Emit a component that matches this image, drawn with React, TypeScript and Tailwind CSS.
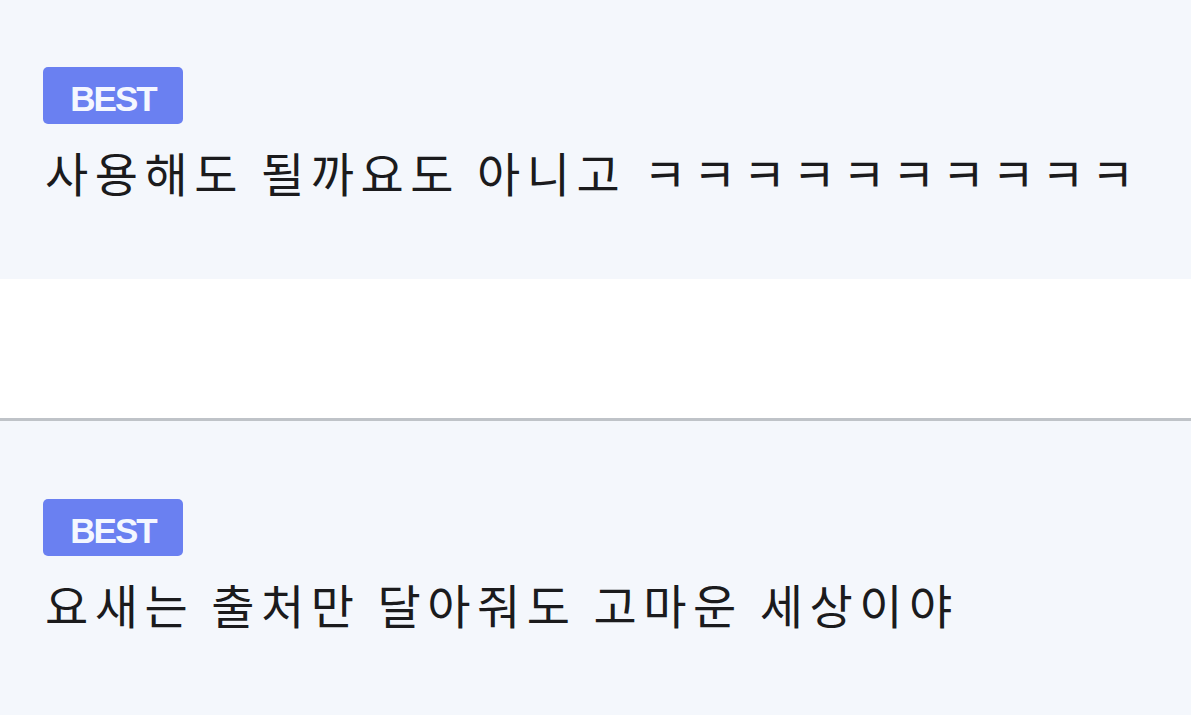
const comments = [
  "사용해도 될까요도 아니고 ㅋㅋㅋㅋㅋㅋㅋㅋㅋㅋ",
  "요새는 출처만 달아줘도 고마운 세상이야",
];

function BestBadge() {
  return (
    <span className="flex h-[57px] w-[140px] items-center justify-center rounded-[5px] bg-[#6a80f1] pt-[7px] font-['Liberation_Sans',Arial,sans-serif] text-[35px] font-bold tracking-[-2px] text-[#f4f7ff]">
      BEST
    </span>
  );
}

function Comment({ text, first }: { text: string; first?: boolean }) {
  return (
    <div
      className={
        first
          ? "h-[279px] bg-[#f4f7fc] pl-[43px] pt-[67px]"
          : "h-[297px] border-t-[3px] border-[#bfc3c8] bg-[#f4f7fc] pl-[43px] pt-[78px]"
      }
    >
      <BestBadge />
      <p className="mt-[24px] pl-[2px] font-['Noto_Sans_CJK_KR',sans-serif] text-[47px] leading-none tracking-[6.5px] whitespace-nowrap text-[#1b1b1d]">
        {text}
      </p>
    </div>
  );
}

export default function App() {
  return (
    <div className="h-[727px] w-[1191px] overflow-hidden bg-white">
      <Comment text={comments[0]} first />
      <div className="h-[139px]" />
      <Comment text={comments[1]} />
    </div>
  );
}
